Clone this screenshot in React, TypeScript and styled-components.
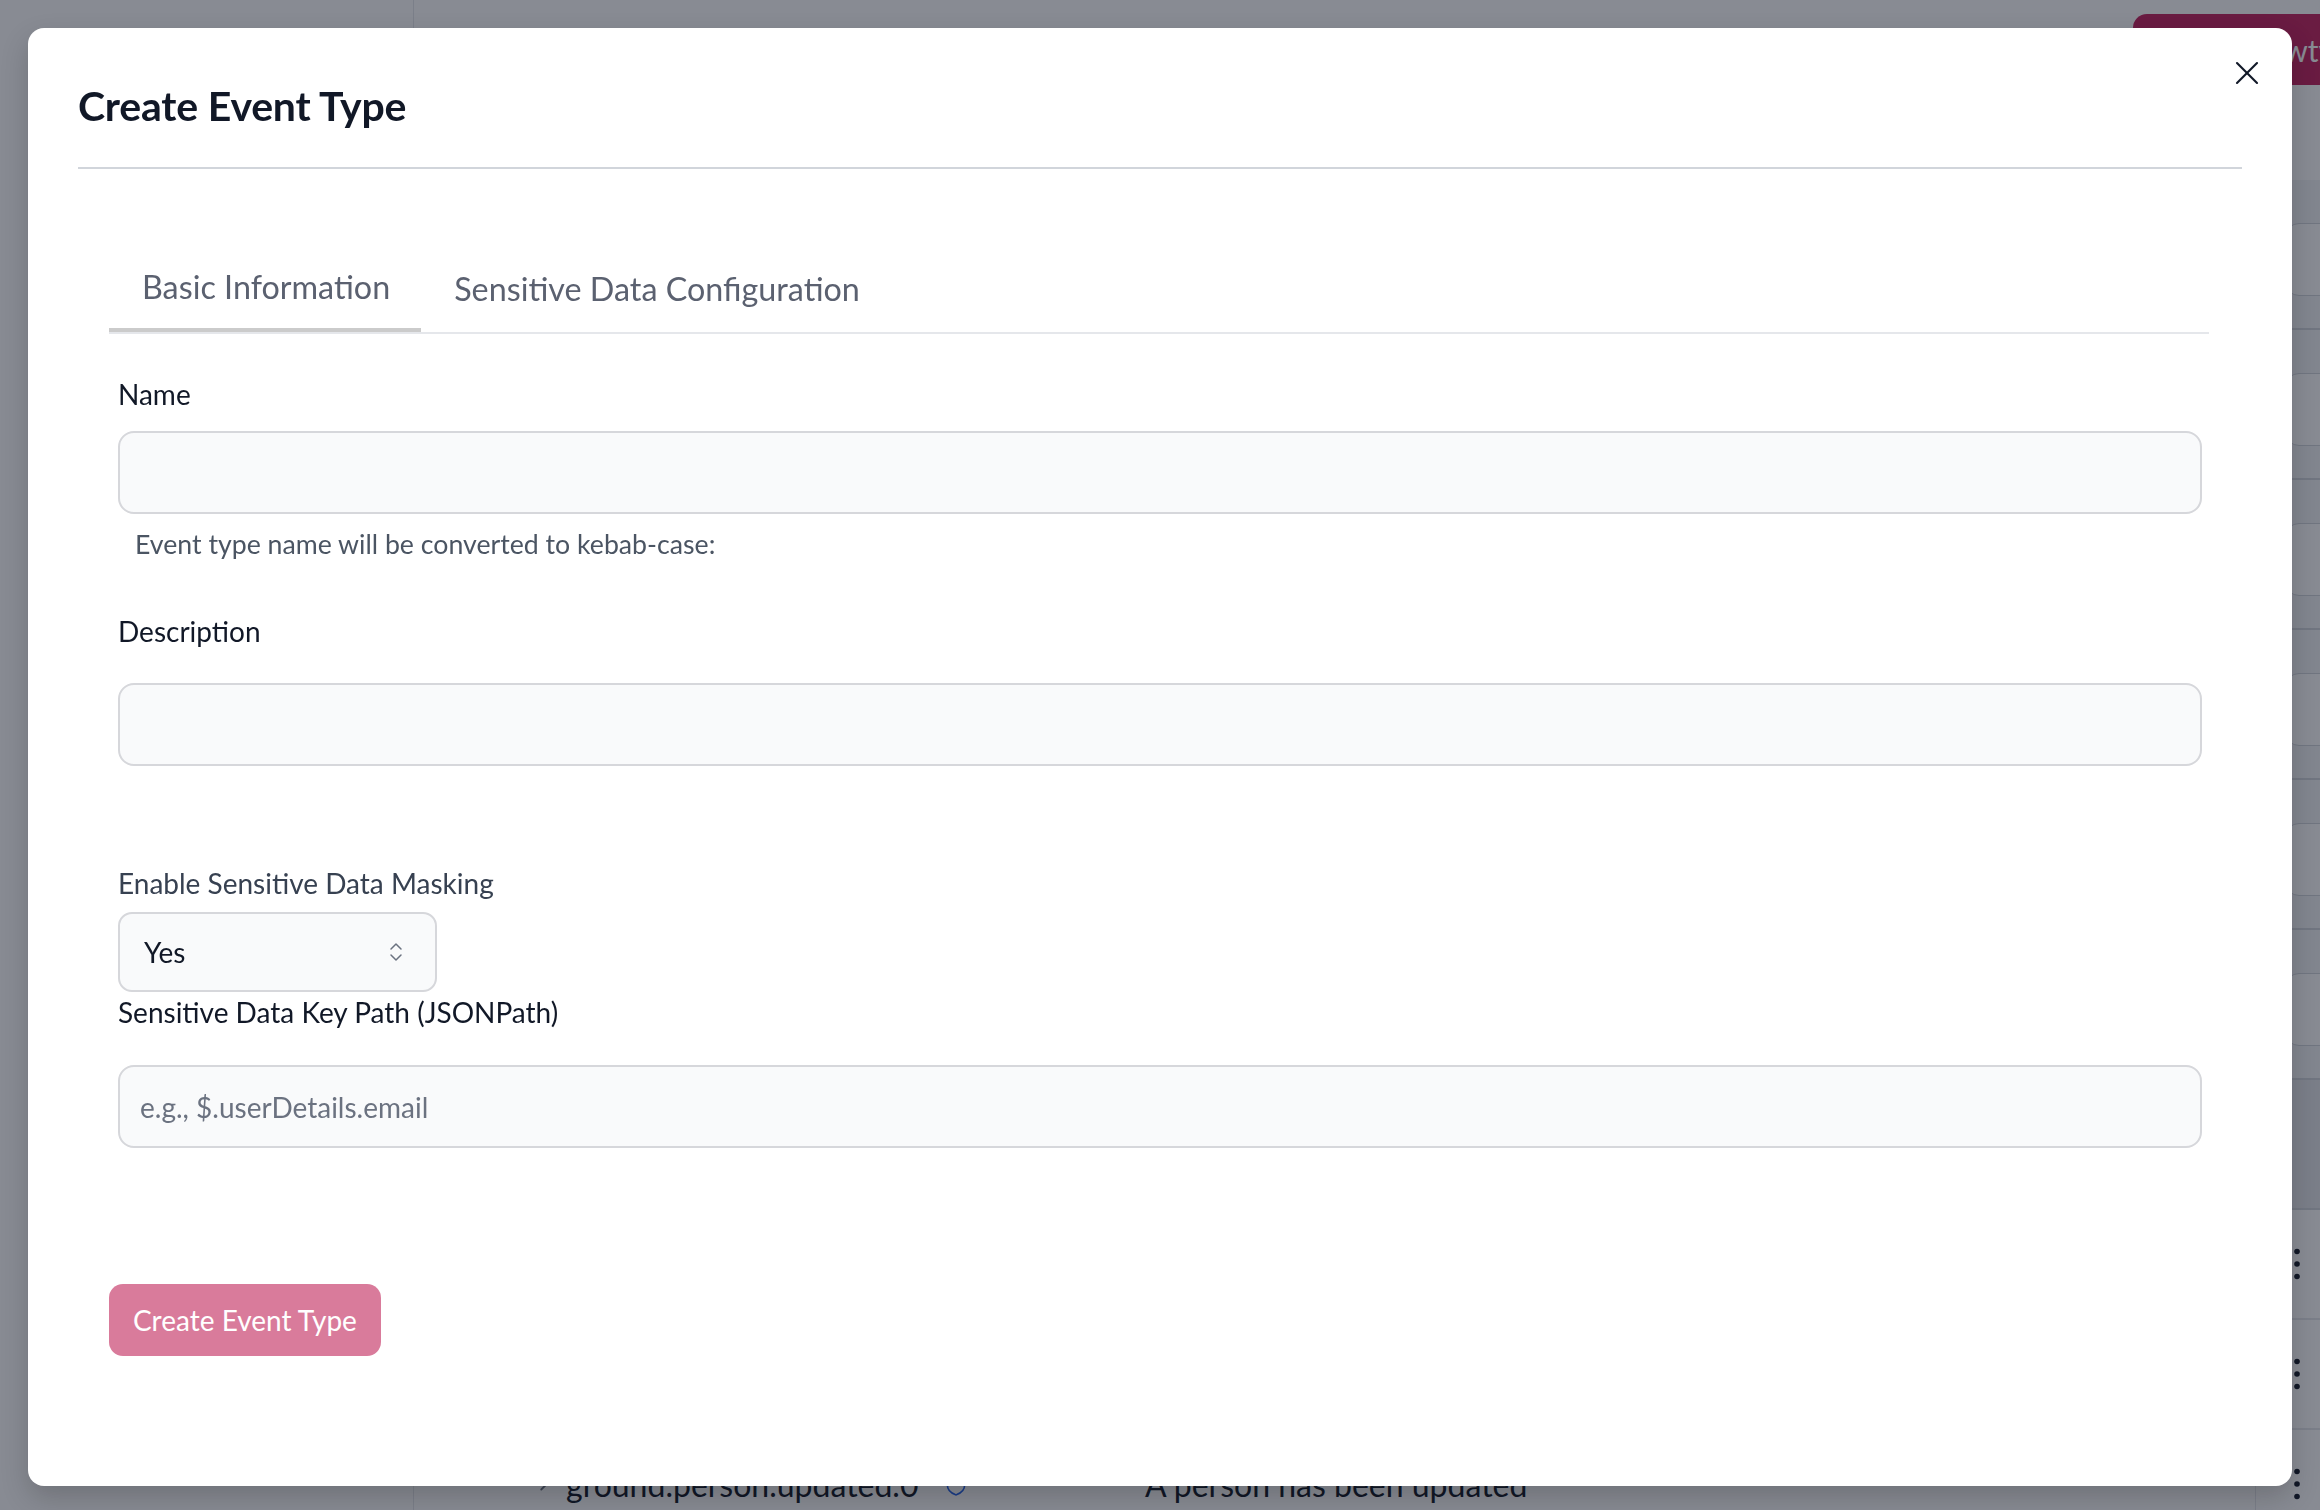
import React from "react";
import styled, { createGlobalStyle } from "styled-components";
import { X, ChevronsUpDown, ChevronRight, Shield } from "lucide-react";

const GlobalStyle = createGlobalStyle`
  html, body { margin: 0; padding: 0; }
  body { font-family: Lato, "Open Sans", "Liberation Sans", sans-serif; background: #fff; }
  * { box-sizing: border-box; }
`;

/* ---------- background page ---------- */

const Page = styled.div`
  width: 2320px;
  height: 1510px;
  overflow: hidden;
  display: grid;
  grid-template-columns: 414px 1fr;
  background: #fff;
`;

const Sidebar = styled.aside`
  border-right: 1px solid #e5e7eb;
  background: #fff;
`;

const Main = styled.main`
  display: flex;
  flex-direction: column;
  min-width: 0;
`;

const TopBar = styled.div`
  height: 180px;
  display: flex;
  justify-content: flex-end;
  align-items: flex-start;
  padding-top: 14px;
`;

const PrimaryButton = styled.button`
  width: 227px;
  height: 71px;
  margin-right: -40px;
  border: none;
  border-radius: 14px;
  background: #c3205d;
  color: #fff;
  font: 400 30px Lato, sans-serif;
  text-align: left;
  padding-left: 113px;
  white-space: nowrap;
  overflow: hidden;
`;

const ListRow = styled.div`
  height: 150px;
  border-bottom: 2px solid #d1d5db;
  background: #f3f4f6;
  display: flex;
  justify-content: flex-end;
  align-items: flex-start;
  padding-top: 43px;
`;

const ListBox = styled.div`
  width: 100px;
  height: 73px;
  margin-right: -65px;
  border-radius: 14px;
  border: 1px solid #d1d5db;
  background: #fff;
`;

const TableHead = styled.div`
  height: 130px;
  background: #e5e7eb;
  border-bottom: 2px solid #d1d5db;
`;

const TableRow = styled.div`
  height: 110px;
  border-bottom: 2px solid #e5e7eb;
  display: grid;
  grid-template-columns: 33px 377px 202px 1fr 65px;
  align-items: center;
  padding-left: 119px;
  font-size: 32px;
  color: #111827;
`;

const Cell = styled.div`
  white-space: nowrap;
  display: flex;
  align-items: center;
`;

const ActionCell = styled.div`
  height: 100%;
  border-left: 1px solid #e5e7eb;
  display: flex;
  align-items: center;
  padding-left: 36px;
`;

const Kebab = () => (
  <svg width="10" height="36" viewBox="0 0 10 36">
    <circle cx="5" cy="5.5" r="2.8" fill="#111827" />
    <circle cx="5" cy="18" r="2.8" fill="#111827" />
    <circle cx="5" cy="30.5" r="2.8" fill="#111827" />
  </svg>
);

/* ---------- modal ---------- */

const Overlay = styled.div`
  position: fixed;
  inset: 0;
  background: rgba(17, 24, 39, 0.5);
  padding: 28px 28px 24px;
  display: flex;
`;

const Dialog = styled.div`
  position: relative;
  flex: 1;
  background: #fff;
  border-radius: 16px;
  box-shadow: 0 12px 28px rgba(0, 0, 0, 0.18);
  display: flex;
  flex-direction: column;
  padding: 0 50px;
`;

const Header = styled.header`
  padding: 54px 0 37px;
  border-bottom: 2px solid #d1d5db;
`;

const Title = styled.h2`
  margin: 0;
  font-size: 41px;
  line-height: 48px;
  font-weight: 700;
  color: #111827;
  letter-spacing: -0.2px;
`;

const CloseButton = styled.button`
  position: absolute;
  top: 25px;
  right: 25px;
  width: 40px;
  height: 40px;
  padding: 0;
  border: none;
  background: transparent;
  color: #111827;
  display: flex;
  align-items: center;
  justify-content: center;
`;

const Body = styled.div`
  padding: 80px 33px 0 31px;
  display: flex;
  flex-direction: column;
  align-items: flex-start;
`;

const TabList = styled.div`
  align-self: stretch;
  display: flex;
  border-bottom: 2px solid #e5e7eb;
`;

const Tab = styled.button<{ $active?: boolean }>`
  border: none;
  background: transparent;
  font-family: Lato, sans-serif;
  font-size: 32.3px;
  line-height: 36px;
  color: #5b6170;
  padding: ${(p) => (p.$active ? "20px 31px 23px 33px" : "22px 31px 21px 33px")};
  border-bottom: 4px solid ${(p) => (p.$active ? "#cbcbcb" : "transparent")};
  cursor: pointer;
`;

const Form = styled.form`
  align-self: stretch;
  display: flex;
  flex-direction: column;
  padding: 0 7px 0 9px;
`;

const Label = styled.label<{ $gap: number; $tone?: string }>`
  margin-top: ${(p) => p.$gap}px;
  font-size: 28px;
  line-height: 40px;
  color: ${(p) => p.$tone || "#111827"};
`;

const TextInput = styled.input<{ $gap: number }>`
  margin-top: ${(p) => p.$gap}px;
  height: 83px;
  width: 100%;
  border: 2px solid #d6d7db;
  border-radius: 16px;
  background: #f9fafb;
  padding: 0 20px;
  font-family: Lato, sans-serif;
  font-size: 28px;
  color: #111827;
  outline: none;
  &::placeholder {
    color: #6b7280;
  }
`;

const Helper = styled.p`
  margin: 12px 0 0;
  padding-left: 17px;
  font-size: 26.7px;
  line-height: 36px;
  color: #4b5563;
`;

const SelectBox = styled.div`
  margin-top: 9px;
  width: 319px;
  height: 80px;
  border: 2px solid #d6d7db;
  border-radius: 14px;
  background: #f9fafb;
  display: flex;
  align-items: center;
  justify-content: space-between;
  padding: 0 27px 0 24px;
  font-size: 28px;
  color: #111827;
`;

const SubmitButton = styled.button`
  margin-top: 136px;
  height: 72px;
  padding: 0 24px;
  border: none;
  border-radius: 14px;
  background: #d97b9b;
  color: #fff;
  font-family: Lato, sans-serif;
  font-size: 28px;
  cursor: not-allowed;
`;

const tableRows = [
  { name: "ground.person.created.0", desc: "A person has been created" },
  { name: "ground.person.deleted.0", desc: "A person has been deleted" },
  { name: "ground.person.updated.0", desc: "A person has been updated" },
];

export default function App() {
  return (
    <>
      <GlobalStyle />
      <Page>
        <Sidebar />
        <Main>
          <TopBar>
            <PrimaryButton>Newtype</PrimaryButton>
          </TopBar>
          {Array.from({ length: 6 }).map((_, i) => (
            <ListRow key={i}>
              <ListBox />
            </ListRow>
          ))}
          <TableHead />
          {tableRows.map((r) => (
            <TableRow key={r.name}>
              <Cell>
                <ChevronRight size={22} color="#6b7280" />
              </Cell>
              <Cell>{r.name}</Cell>
              <Cell>
                <Shield size={26} color="#2563eb" strokeWidth={1.5} />
              </Cell>
              <Cell>{r.desc}</Cell>
              <ActionCell>
                <Kebab />
              </ActionCell>
            </TableRow>
          ))}
        </Main>
      </Page>

      <Overlay>
        <Dialog role="dialog" aria-modal="true">
          <Header>
            <Title>Create Event Type</Title>
          </Header>
          <CloseButton aria-label="Close">
            <X size={40} strokeWidth={1.25} />
          </CloseButton>
          <Body>
            <TabList>
              <Tab $active>Basic Information</Tab>
              <Tab>Sensitive Data Configuration</Tab>
            </TabList>
            <Form onSubmit={(e) => e.preventDefault()}>
              <Label $gap={40}>Name</Label>
              <TextInput $gap={17} />
              <Helper>Event type name will be converted to kebab-case:</Helper>
              <Label $gap={49}>Description</Label>
              <TextInput $gap={32} />
              <Label $gap={97} $tone="#374151">
                Enable Sensitive Data Masking
              </Label>
              <SelectBox>
                <span>Yes</span>
                <ChevronsUpDown size={24} color="#6b7280" strokeWidth={1.5} />
              </SelectBox>
              <Label $gap={0}>Sensitive Data Key Path (JSONPath)</Label>
              <TextInput $gap={33} placeholder="e.g., $.userDetails.email" />
            </Form>
            <SubmitButton disabled>Create Event Type</SubmitButton>
          </Body>
        </Dialog>
      </Overlay>
    </>
  );
}
